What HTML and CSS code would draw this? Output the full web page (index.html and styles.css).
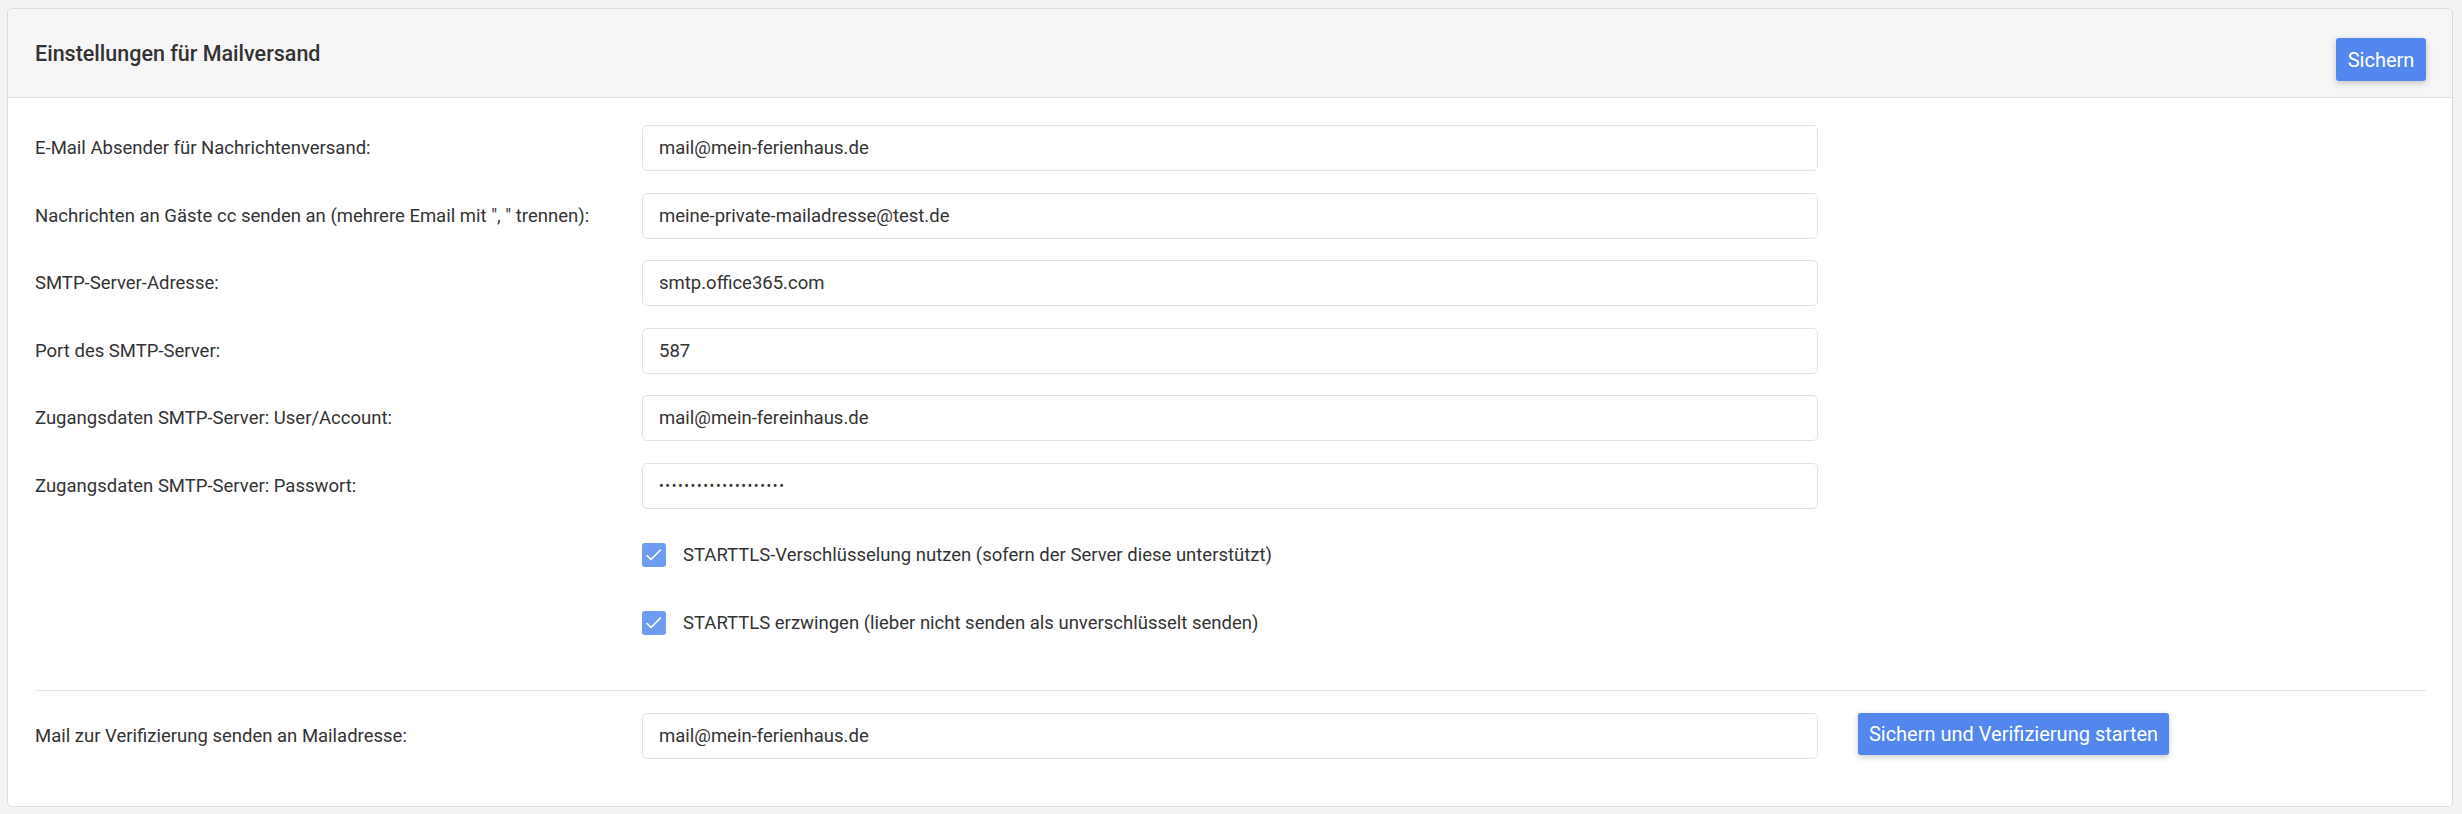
FILE: index.html
```html
<!DOCTYPE html>
<html lang="de">
<head>
<meta charset="utf-8">
<title>Einstellungen für Mailversand</title>
<link rel="stylesheet" href="styles.css">
</head>
<body>
  <section class="card">
    <header class="card-header">
      <h2 class="card-title">Einstellungen für Mailversand</h2>
      <button class="btn btn-save" type="button">Sichern</button>
    </header>
    <form class="card-body">
      <div class="form-row">
        <label class="form-label" for="absender">E-Mail Absender für Nachrichtenversand:</label>
        <input class="form-input" id="absender" type="text" value="mail@mein-ferienhaus.de">
      </div>
      <div class="form-row">
        <label class="form-label" for="cc">Nachrichten an Gäste cc senden an (mehrere Email mit ", " trennen):</label>
        <input class="form-input" id="cc" type="text" value="meine-private-mailadresse@test.de">
      </div>
      <div class="form-row">
        <label class="form-label" for="server">SMTP-Server-Adresse:</label>
        <input class="form-input" id="server" type="text" value="smtp.office365.com">
      </div>
      <div class="form-row">
        <label class="form-label" for="port">Port des SMTP-Server:</label>
        <input class="form-input" id="port" type="text" value="587">
      </div>
      <div class="form-row">
        <label class="form-label" for="user">Zugangsdaten SMTP-Server: User/Account:</label>
        <input class="form-input" id="user" type="text" value="mail@mein-fereinhaus.de">
      </div>
      <div class="form-row">
        <label class="form-label" for="pass">Zugangsdaten SMTP-Server: Passwort:</label>
        <input class="form-input form-password" id="pass" type="password" value="abcdefghijklmnopqrst">
      </div>
      <div class="form-row check-row check-first">
        <span class="form-label"></span>
        <label class="check">
          <span class="check-box"><svg viewBox="0 0 24 24" width="24" height="24"><path d="M5 12.5 L9 16.5 L18.5 7" fill="none" stroke="#fff" stroke-width="1.6" stroke-linecap="round" stroke-linejoin="round"/></svg></span>
          <span class="check-text">STARTTLS-Verschlüsselung nutzen (sofern der Server diese unterstützt)</span>
        </label>
      </div>
      <div class="form-row check-row">
        <span class="form-label"></span>
        <label class="check">
          <span class="check-box"><svg viewBox="0 0 24 24" width="24" height="24"><path d="M5 12.5 L9 16.5 L18.5 7" fill="none" stroke="#fff" stroke-width="1.6" stroke-linecap="round" stroke-linejoin="round"/></svg></span>
          <span class="check-text">STARTTLS erzwingen (lieber nicht senden als unverschlüsselt senden)</span>
        </label>
      </div>
      <hr class="divider">
      <div class="form-row">
        <label class="form-label" for="verify">Mail zur Verifizierung senden an Mailadresse:</label>
        <input class="form-input" id="verify" type="text" value="mail@mein-ferienhaus.de">
        <button class="btn btn-verify" type="button">Sichern und Verifizierung starten</button>
      </div>
    </form>
  </section>
</body>
</html>
```

FILE: styles.css
```css
* {
  box-sizing: border-box;
}

html, body {
  margin: 0;
}

body {
  background: #f3f3f3;
  padding: 8px 9px 9px 7px;
  font-family: Roboto, "Liberation Sans", Arial, sans-serif;
  color: #333;
}

.card {
  background: #fff;
  border: 1px solid #dcdcdc;
  border-radius: 5px;
  overflow: hidden;
}

.card-header {
  display: flex;
  align-items: center;
  justify-content: space-between;
  height: 89px;
  padding: 0 26px 0 27px;
  background: #f6f6f6;
  border-bottom: 1px solid #e0e0e0;
}

.card-title {
  margin: 0;
  font-size: 21.5px;
  font-weight: 500;
  color: #333;
}

.btn {
  font-family: inherit;
  font-size: 20px;
  color: #fff;
  background: #5487ee;
  border: 0;
  border-radius: 3px;
  box-shadow: 0 2px 6px rgba(0, 0, 0, 0.22);
  white-space: nowrap;
  cursor: pointer;
}

.btn-save {
  align-self: flex-start;
  margin-top: 29px;
  width: 90px;
  height: 43px;
  padding: 0 10px;
}

.card-body {
  display: flex;
  flex-direction: column;
  gap: 21.5px;
  padding: 27px 26px 47px 27px;
  margin: 0;
}

.form-row {
  display: flex;
  align-items: center;
  min-height: 46px;
}

.form-label {
  flex: 0 0 607px;
  font-size: 18.5px;
  color: #333;
}

.form-input {
  flex: 0 0 1176px;
  height: 46px;
  padding: 0 16px;
  font-family: inherit;
  font-size: 18.5px;
  color: #333;
  background: #fff;
  border: 1px solid #e2e2e2;
  border-radius: 5px;
  outline: none;
}

.form-password {
  font-size: 14px;
  letter-spacing: 1.6px;
}

.check-first {
  margin-top: 2px;
}

.check {
  display: flex;
  align-items: center;
  gap: 17px;
  font-size: 18.5px;
  color: #333;
}

.check-box {
  display: flex;
  width: 24px;
  height: 24px;
  border-radius: 3px;
  background: #6f9bf2;
}

.divider {
  margin: 23px 0 0;
  border: 0;
  border-top: 1px solid #e4e4e4;
  height: 0;
}

.btn-verify {
  align-self: flex-start;
  margin-left: 40px;
  width: 311px;
  height: 42px;
  padding: 0 6px;
}
```
